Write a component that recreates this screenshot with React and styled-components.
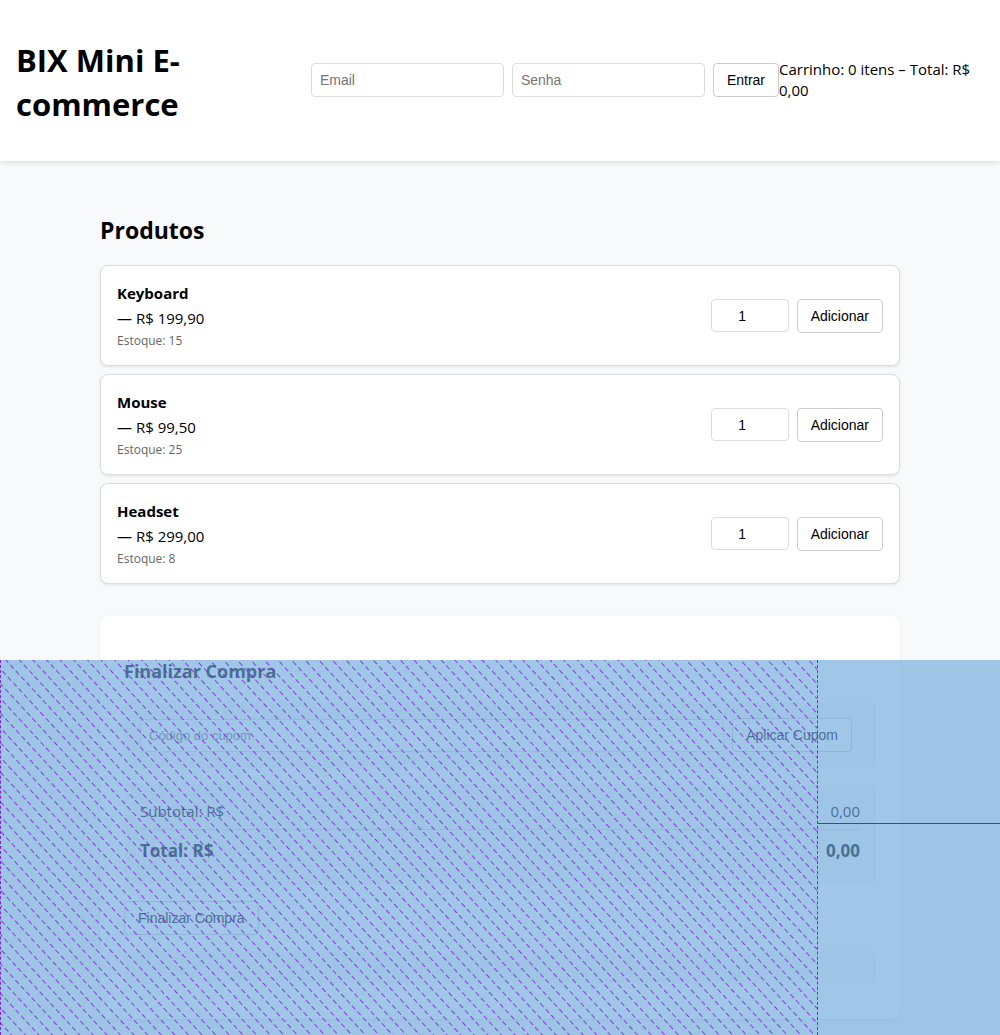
import React, { useState } from "react";
import styled, { createGlobalStyle } from "styled-components";

const GlobalStyle = createGlobalStyle`
  *, *::before, *::after { box-sizing: border-box; }
  body {
    margin: 0;
    background: #f8f9fa;
    color: #000;
    font-family: "Segoe UI", "Open Sans", "Noto Sans", sans-serif;
    font-size: 15px;
    line-height: 21px;
  }
`;

const Header = styled.header`
  display: flex;
  align-items: center;
  padding: 16px 16px 17px;
  background: #fff;
  box-shadow: 0 2px 4px rgba(0, 0, 0, 0.1);
`;

const Title = styled.h1`
  flex: 1;
  margin: 22px 0 18px;
  font-size: 31px;
  line-height: 44px;
`;

const LoginForm = styled.form`
  display: flex;
  gap: 8px;
`;

const Input = styled.input`
  width: ${(p) => p.$width || "auto"};
  height: ${(p) => p.$height || "34px"};
  flex: ${(p) => (p.$grow ? 1 : "none")};
  min-width: 0;
  padding: 8px;
  border: 1px solid #ddd;
  border-radius: 4px;
  background: #fff;
  font-family: Arial, "Liberation Sans", sans-serif;
  font-size: ${(p) => (p.$small ? "13px" : "14px")};
  text-align: ${(p) => p.$align || "left"};

  &::placeholder { color: #757575; }
`;

const Button = styled.button`
  height: 34px;
  padding: 8px 13px;
  border: 1px solid #ccc;
  border-radius: 4px;
  background: #fff;
  color: #000;
  font-family: Arial, "Liberation Sans", sans-serif;
  font-size: 14px;
  line-height: 16px;
  white-space: nowrap;
  cursor: pointer;
`;

const CartSummary = styled.div`
  width: 205px;
`;

const Main = styled.main`
  max-width: 800px;
  margin: 0 auto;
  padding: 32px 0 12px;
`;

const SectionTitle = styled.h2`
  margin: 21px 0 19px;
  font-size: 23px;
  line-height: 32px;
`;

const ProductList = styled.ul`
  display: grid;
  gap: 8px;
  margin: 0 0 32px;
  padding: 0;
  list-style: none;
`;

const ProductCard = styled.li`
  display: flex;
  justify-content: space-between;
  align-items: center;
  padding: 16px;
  border: 1px solid #ddd;
  border-radius: 8px;
  background: #fff;
  box-shadow: 0 1px 3px rgba(0, 0, 0, 0.1);
`;

const ProductInfo = styled.div`
  display: grid;
  gap: 4px;
  padding-top: 1px;
`;

const Stock = styled.small`
  color: #666;
  font-size: 12px;
  line-height: 16px;
`;

const Actions = styled.div`
  display: flex;
  align-items: center;
  gap: 8px;
`;

const Checkout = styled.section`
  padding: 24px 24px 36px;
  border-radius: 8px;
  background: #fff;
  box-shadow: 0 1px 3px rgba(0, 0, 0, 0.1);
`;

const CheckoutTitle = styled.h3`
  margin: 19px 0 18px;
  font-size: 18px;
  line-height: 25px;
`;

const Panel = styled.div`
  margin-bottom: 16px;
  padding: 16px;
  border-radius: 4px;
  background: #f8f9fa;
`;

const CouponPanel = styled(Panel)`
  display: flex;
  align-items: center;
  gap: 8px;
  padding-right: 24px;
`;

const TotalRow = styled.div`
  display: flex;
  justify-content: space-between;
  margin-bottom: 6px;
  line-height: 23px;
  ${(p) =>
    p.$grand &&
    `
    padding-top: 8px;
    border-top: 1px solid #ddd;
    font-size: 17px;
    font-weight: 700;
    line-height: 25px;
  `}
`;

const Message = styled(Panel)`
  min-height: 32px;
  margin: 16px 0 0;
`;

const Highlight = styled.div`
  position: fixed;
  inset: 660px 0 0;
  display: flex;
  background: rgba(111, 168, 220, 0.66);
  pointer-events: none;
`;

const FreeSpace = styled.div`
  flex: 1;
  border: 1px dashed #8422dd;
  border-width: 0 1px;

  svg { display: block; width: 100%; height: 100%; }
`;

const ItemEdge = styled.div`
  width: 182px;
  height: 164px;
  border-bottom: 1px solid #7a1fcf;
`;

const products = [
  { name: "Keyboard", price: "199,90", stock: 15 },
  { name: "Mouse", price: "99,50", stock: 25 },
  { name: "Headset", price: "299,00", stock: 8 },
];

const hatchPath = Array.from(
  { length: 8 },
  (_, row) => `M${1 - row} ${6.5 + row * 10}h5m3 0h5`
).join("");

function Product({ name, price, stock }) {
  const [quantity, setQuantity] = useState(1);
  return (
    <ProductCard>
      <ProductInfo>
        <strong>{name}</strong>
        <span>— R$ {price}</span>
        <Stock>Estoque: {stock}</Stock>
      </ProductInfo>
      <Actions>
        <Input
          type="number"
          min="1"
          aria-label={`Quantidade de ${name}`}
          value={quantity}
          onChange={(e) => setQuantity(e.target.value)}
          $width="78px"
          $height="33px"
          $align="center"
        />
        <Button type="button">Adicionar</Button>
      </Actions>
    </ProductCard>
  );
}

function HatchOverlay() {
  return (
    <Highlight aria-hidden="true">
      <FreeSpace>
        <svg>
          <defs>
            <pattern
              id="hatch"
              width="8"
              height="80"
              patternUnits="userSpaceOnUse"
              patternTransform="rotate(47.3)"
            >
              <path
                d={hatchPath}
                fill="none"
                stroke="#8422dd"
                strokeOpacity="0.85"
                strokeWidth="1"
              />
            </pattern>
          </defs>
          <rect width="100%" height="100%" fill="url(#hatch)" />
        </svg>
      </FreeSpace>
      <ItemEdge />
    </Highlight>
  );
}

export default function App() {
  return (
    <>
      <GlobalStyle />
      <Header>
        <Title>BIX Mini E-commerce</Title>
        <LoginForm onSubmit={(e) => e.preventDefault()}>
          <Input type="email" placeholder="Email" aria-label="Email" $width="193px" />
          <Input type="password" placeholder="Senha" aria-label="Senha" $width="193px" />
          <Button type="submit">Entrar</Button>
        </LoginForm>
        <CartSummary>Carrinho: 0 itens – Total: R$ 0,00</CartSummary>
      </Header>
      <Main>
        <SectionTitle>Produtos</SectionTitle>
        <ProductList>
          {products.map((product) => (
            <Product key={product.name} {...product} />
          ))}
        </ProductList>
        <Checkout>
          <CheckoutTitle>Finalizar Compra</CheckoutTitle>
          <CouponPanel>
            <Input
              type="text"
              placeholder="Código do cupom"
              aria-label="Código do cupom"
              $height="33px"
              $grow
              $small
            />
            <Button type="button">Aplicar Cupom</Button>
          </CouponPanel>
          <Panel>
            <TotalRow>
              <span>Subtotal: R$</span>
              <span>0,00</span>
            </TotalRow>
            <TotalRow $grand>
              <span>Total: R$</span>
              <span>0,00</span>
            </TotalRow>
          </Panel>
          <Button type="button">Finalizar Compra</Button>
          <Message role="status" />
        </Checkout>
      </Main>
      <HatchOverlay />
    </>
  );
}
